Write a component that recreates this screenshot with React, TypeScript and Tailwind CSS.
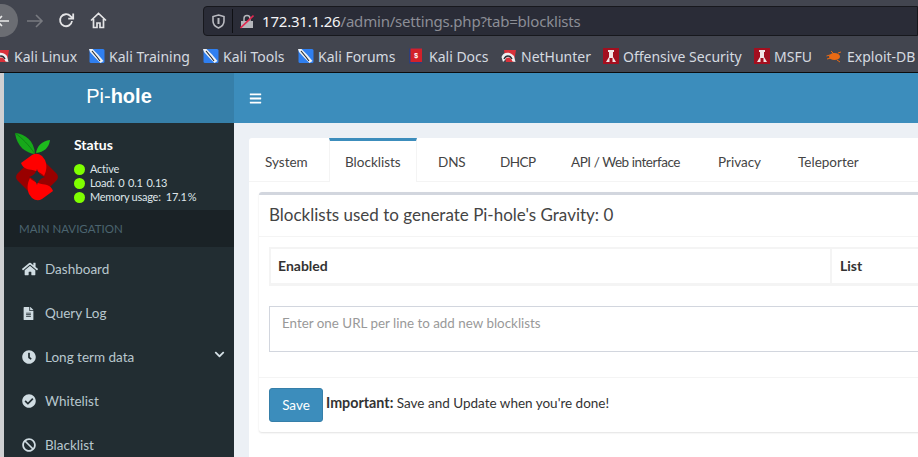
import React from "react";
import { FaHome, FaFileAlt, FaClock, FaCheckCircle, FaBan, FaChevronDown, FaBars } from "react-icons/fa";

const KaliDragon = () => (
  <svg width="16" height="16" viewBox="0 0 16 16" className="shrink-0">
    <rect x="0.5" y="1" width="15" height="14" rx="1.5" fill="#2f7ff0" />
    <path d="M0 1 L3.5 1 L9 6.5 L14.5 13 L11.5 15 L6 9.5 L1 4 Z" fill="#eef2f6" />
    <path d="M3 3 L8 9 L11 13" stroke="#20252c" strokeWidth="1.1" fill="none" />
  </svg>
);
const KaliRed = () => (
  <svg width="16" height="16" viewBox="0 0 16 16" className="shrink-0">
    <path d="M3 2 H15 L13 14 H5 Z" fill="#d8313a" />
    <path d="M0.5 9 C2 4 9 3 13 8 L14.5 14 L11.5 13.5 C10 9 6 8 4 12 L2 14 Z" fill="#eef0f2" />
    <path d="M3 11 C5 7 9 7 11 11" stroke="#2b2d33" strokeWidth="1.4" fill="none" />
  </svg>
);
const KaliDocs = () => (
  <svg width="14" height="16" viewBox="0 0 14 16" className="shrink-0">
    <rect x="0" y="0.5" width="13" height="15" fill="#2d3f7c" />
    <rect x="1.5" y="0.5" width="11.5" height="13.5" fill="#d3212a" />
    <text x="7" y="9.5" fontSize="7" fontWeight="700" fill="#fff" textAnchor="middle" fontFamily="Liberation Mono, monospace">$</text>
  </svg>
);
const Msf = () => (
  <svg width="16" height="16" viewBox="0 0 16 16" className="shrink-0">
    <rect width="16" height="16" fill="#a30f1f" />
    <path d="M5 2 H11 V4 H10 V9 L13 14 H9.5 V10 H6.5 V14 H3 L6 9 V4 H5 Z" fill="#f2e6e6" />
  </svg>
);
const ExploitDb = () => (
  <svg width="16" height="16" viewBox="0 0 16 16" className="shrink-0">
    <ellipse cx="8.5" cy="8.5" rx="5.5" ry="3.6" fill="#ea6a14" />
    <path d="M0.5 8 L4 7 M1 11 L5 10 M5 3 L8 6 M11 12 L14 14 M12 5 L15 4" stroke="#ea6a14" strokeWidth="1" />
  </svg>
);

const bookmarks = [
  { label: "Kali Linux", icon: <KaliRed />, box: "w-[95px] ml-[-6px] gap-[4px]" },
  { label: "Kali Training", icon: <KaliDragon />, box: "w-[114px] gap-[4px]" },
  { label: "Kali Tools", icon: <KaliDragon />, box: "w-[95px] gap-[4px]" },
  { label: "Kali Forums", icon: <KaliDragon />, box: "w-[111px] gap-[4px]" },
  { label: "Kali Docs", icon: <KaliDocs />, box: "w-[92px] gap-[6px]" },
  { label: "NetHunter", icon: <KaliRed />, box: "w-[102px] gap-[4px]" },
  { label: "Offensive Security", icon: <Msf />, box: "w-[151px] gap-[4px]" },
  { label: "MSFU", icon: <Msf />, box: "w-[72px] gap-[4px]" },
  { label: "Exploit-DB", icon: <ExploitDb />, box: "w-[100px] gap-[5px]" },
];

const PiLogo = () => (
  <svg width="46" height="68" viewBox="0 0 46 68" className="overflow-visible">
    <path d="M1 0 C11 1 20 7 21 21 C12 20 3 14 1 0 Z" fill="#17a81a" />
    <path d="M1 0 C8 5 15 12 21 21" stroke="#0c6b12" strokeWidth="0.6" fill="none" />
    <path d="M36 7 C35 15 30 19 22 20 C23 13 28 8 36 7 Z" fill="#1dbb1d" />
    <rect x="6.75" y="27.75" width="32.5" height="32.5" rx="5" transform="rotate(45 23 44)" fill="#990000" />
    <path d="M7 30 L18 22 Q23 19 28 23 L31 27 C33 32 33 37 30 43 C26 38 18 37 13 36 C10 35 8 33 7 30 Z" fill="#ff0000" />
    <path d="M39 58 L28 66 Q23 69 18 65 L15 61 C13 56 13 51 16 45 C20 50 28 51 33 52 C36 53 38 55 39 58 Z" fill="#ff0000" />
    <path d="M23 36 C24 40 27 43 31 44 C27 45 24 48 23 52 C22 48 19 45 15 44 C19 43 22 40 23 36 Z" fill="#222d32" />
  </svg>
);

const nav = [
  { label: "Dashboard", icon: <FaHome size={16} /> },
  { label: "Query Log", icon: <FaFileAlt size={13} /> },
  { label: "Long term data", icon: <FaClock size={14} />, more: true },
  { label: "Whitelist", icon: <FaCheckCircle size={14} /> },
  { label: "Blacklist", icon: <FaBan size={14} /> },
];

const tabs = [
  { label: "System", box: "w-[80px] pl-[16px] pt-[6px]" },
  { label: "Blocklists", box: "w-[88px] h-[44px] pl-[15px] pt-[2px] border-t-[3px] border-x border-t-[#3c8dbc] border-x-[#f4f4f4] bg-white" },
  { label: "DNS", box: "w-[62px] pl-[21px] pt-[6px] tracking-[-0.1px]" },
  { label: "DHCP", box: "w-[71px] pl-[21px] pt-[6px] tracking-[-0.5px]" },
  { label: "API / Web interface", box: "w-[147px] pl-[21px] pt-[6px] tracking-[-0.45px]" },
  { label: "Privacy", box: "w-[80px] pl-[21px] pt-[6px]" },
  { label: "Teleporter", box: "w-[95px] pl-[21px] pt-[6px]" },
];

const Dot = () => <span className="w-[11px] h-[11px] rounded-full bg-[#7fff00] shrink-0" />;

export default function App() {
  return (
    <div className="w-[918px] h-[457px] overflow-hidden flex flex-col bg-white font-['Lato',sans-serif]">
      <div className="h-[73px] shrink-0 flex flex-col bg-[#42454f] border-b border-b-[#0c0c0d] font-['Noto_Sans',sans-serif]">
        <div className="h-[36px] flex items-start">
          <div className="w-[18px] h-[33px] mt-[4px] rounded-r-full bg-[#6b6d73] flex items-center overflow-hidden shrink-0">
            <svg width="10" height="14" viewBox="0 0 10 14" className="overflow-visible"><path d="M-3 7 H9 M-3 7 L2 2 M-3 7 L2 12" stroke="#e8e8e8" strokeWidth="1.6" fill="none" /></svg>
          </div>
          <svg className="ml-[8px] mt-[13px]" width="18" height="16" viewBox="0 0 18 16"><path d="M1 8 H16 M10 2 L16 8 L10 14" stroke="#787a80" strokeWidth="1.6" fill="none" /></svg>
          <svg className="ml-[14px] mt-[12px]" width="17" height="17" viewBox="0 0 17 17"><path d="M14 9 A6 6 0 1 1 12.5 4.2 L15 6.5 M15.2 1.5 V6.6 H10.2" stroke="#e4e4e6" strokeWidth="1.8" fill="none" /></svg>
          <svg className="ml-[15px] mt-[12px]" width="17" height="17" viewBox="0 0 17 17"><path d="M1 8.5 L8.5 1.5 L16 8.5 M3.5 7 V15.5 H7 V11 H10 V15.5 H13.5 V7" stroke="#e4e4e6" strokeWidth="1.7" fill="none" /></svg>
          <div className="ml-[96px] mt-[6px] flex-1 h-[30px] bg-[#2a2c37] border border-[#17181d] rounded-l-[4px] flex items-center">
            <svg className="ml-[8px]" width="13" height="15" viewBox="0 0 13 15"><path d="M6.5 1 L12 2.5 V7 C12 11 9 13 6.5 14 C4 13 1 11 1 7 V2.5 Z" stroke="#b9bac0" strokeWidth="1.6" fill="none" /><path d="M6.5 4 V10" stroke="#b9bac0" strokeWidth="2" /></svg>
            <div className="ml-[7px] w-px h-[24px] bg-[#0f1014]" />
            <svg className="ml-[7px]" width="14" height="15" viewBox="0 0 14 15"><path d="M1 7 H13 V14 H1 Z" fill="#b5b6bb" /><path d="M4 7 V4.5 A3 3 0 0 1 10 4.5 V7" stroke="#b5b6bb" strokeWidth="1.5" fill="none" /><path d="M0.5 14 L13.5 1.5" stroke="#e22850" strokeWidth="1.6" /></svg>
            <div className="ml-[8px] text-[15px] leading-none text-[#8c8e96] tracking-[-0.2px] whitespace-nowrap"><span className="text-[#f4f4f6]">172.31.1.26</span>/admin/settings.php?tab=blocklists</div>
          </div>
        </div>
        <div className="h-[36px] pt-[4px] flex items-center text-[14px] text-[#d5dae0] whitespace-nowrap overflow-hidden">
          {bookmarks.map((b) => (
            <div key={b.label} className={`flex items-center shrink-0 ${b.box}`}>
              {b.icon}
              <span>{b.label}</span>
            </div>
          ))}
        </div>
      </div>

      <div className="flex-1 flex min-h-0">
        <div className="w-[4px] shrink-0 bg-[#cfd0d2]" />
        <aside className="w-[230px] shrink-0 flex flex-col bg-[#222d32] text-[#b8c7ce]">
          <div className="h-[50px] shrink-0 bg-[#367fa9] flex items-center justify-center text-[20px] text-white font-['Liberation_Sans',sans-serif] pb-[4px]">
            Pi-<b>hole</b>
          </div>
          <div className="h-[87px] shrink-0 flex">
            <div className="ml-[10px] mt-[10px] w-[46px]"><PiLogo /></div>
            <div className="ml-[14px] mt-[13px] text-white">
              <div className="text-[14px] font-bold leading-[18px]">Status</div>
              <div className="mt-[8px] text-[11px] tracking-[-0.25px] leading-[14px] text-[#dfe6ea] whitespace-nowrap">
                <div className="flex items-center gap-[5px]"><Dot />Active</div>
                <div className="flex items-center gap-[5px]"><Dot />Load:&nbsp;&thinsp;0&nbsp;&thinsp;0.1&nbsp;&thinsp;0.13</div>
                <div className="flex items-center gap-[5px]"><Dot />Memory usage:&nbsp;&nbsp;17.1&thinsp;%</div>
              </div>
            </div>
          </div>
          <div className="h-[37px] shrink-0 bg-[#1a2226] text-[#4b646f] text-[11.5px] flex items-center pl-[15px]">MAIN NAVIGATION</div>
          <nav>
            {nav.map((n) => (
              <div key={n.label} className="h-[44px] flex items-center pl-[18px] pr-[9px] text-[13.5px]">
                <span className="w-[23px] flex justify-start text-[#d0dce2]">{n.icon}</span>
                <span>{n.label}</span>
                {n.more && <FaChevronDown size={11} className="ml-auto mb-[6px] text-[#d5e0e6]" />}
              </div>
            ))}
          </nav>
        </aside>

        <main className="flex-1 min-w-0 flex flex-col overflow-hidden bg-[#ecf0f5]">
          <div className="h-[50px] shrink-0 bg-[#3c8dbc] flex items-center pl-[15px] text-white">
            <FaBars size={13} />
          </div>
          <div className="flex-1 pl-[15px] pt-[15px]">
            <div className="w-[900px] h-full bg-white rounded-tl-[3px] text-[#444]">
              <div className="h-[44px] flex border-b border-b-[#f4f4f4] text-[13.5px] text-[#444]">
                {tabs.map((t) => (
                  <div key={t.label} className={`flex items-center whitespace-nowrap shrink-0 ${t.box}`}>{t.label}</div>
                ))}
              </div>
              <div className="ml-[10px] mt-[10px] h-[240px] border-t-[3px] border-t-[#d2d6de] rounded-[3px] shadow-[0_1px_2px_rgba(0,0,0,0.12)] flex flex-col">
                <div className="h-[42px] shrink-0 flex items-center pl-[10px] pb-[2px] text-[17px] border-b border-b-[#f4f4f4]">Blocklists used to generate Pi-hole's Gravity: 0</div>
                <div className="pl-[10px] pt-[10px]">
                  <div className="h-[39px] flex items-center border-[2px] border-[#f4f4f4] border-b-[3px] text-[14px] font-bold text-[#333]">
                    <div className="w-[561px] h-full flex items-center pl-[7px] pb-[2px] border-r-[2px] border-r-[#f4f4f4]">Enabled</div>
                    <div className="pl-[8px] pb-[2px]">List</div>
                  </div>
                  <div className="mt-[20px] h-[46px] border border-[#d2d6de] pl-[12px] pt-[7px] text-[13.4px] leading-[18px] text-[#999]">Enter one URL per line to add new blocklists</div>
                </div>
                <div className="mt-[25px] flex-1 border-t border-t-[#f4f4f4] pl-[10px] pt-[10px] flex items-start">
                  <div className="w-[54px] h-[34px] rounded-[3px] bg-[#3c8dbc] border border-[#367fa9] text-white text-[13.5px] flex items-center justify-center">Save</div>
                  <div className="ml-[3px] mt-[5px] text-[13.5px] leading-[20px] text-[#333]"><b className="text-[14.3px]">Important:</b> Save and Update when you're done!</div>
                </div>
              </div>
            </div>
          </div>
        </main>
      </div>
    </div>
  );
}
